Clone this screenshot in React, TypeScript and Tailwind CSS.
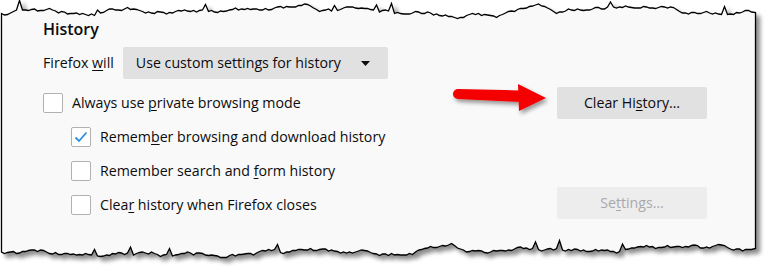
import React from 'react';

// torn paper edge, deterministic
function tornEdge(seed: number, base: number, amp: number, x0: number, x1: number) {
  let s = seed;
  const rand = () => {
    s = (s * 9301 + 49297) % 233280;
    return s / 233280;
  };
  const pts: [number, number][] = [];
  let y = base;
  let drift = 0;
  for (let x = x0; x <= x1; x += 3) {
    drift += (rand() - 0.5) * 1.2 - drift * 0.08;
    y += (rand() - 0.5) * 3.6 - (y - base - drift * 3) * 0.15;
    let yy = y;
    if (rand() < 0.035) yy -= amp * (0.8 + rand());
    pts.push([x, Math.round(yy * 2) / 2]);
  }
  pts[pts.length - 1][0] = x1;
  return pts;
}

const top = tornEdge(17, 12, 5, 1.5, 755.5);
const bottom = tornEdge(91, 251, 5, 1.5, 755.5);

const framePath =
  'M' +
  top.map(([x, y]) => `${x},${y}`).join(' L') +
  ' L' +
  bottom
    .slice()
    .reverse()
    .map(([x, y]) => `${x},${y}`)
    .join(' L') +
  ' Z';

function AccessKey({ text, k }: { text: string; k: number }) {
  return (
    <span>
      {text.slice(0, k)}
      <span className="underline underline-offset-2 decoration-1">{text[k]}</span>
      {text.slice(k + 1)}
    </span>
  );
}

function Checkbox({ checked }: { checked?: boolean }) {
  return (
    <div className="w-[20px] h-[20px] rounded-[2px] border border-[#b1b1b3] bg-white flex items-center justify-center shrink-0">
      {checked && (
        <svg width="14" height="12" viewBox="0 0 14 12">
          <path d="M1.5 6.5 L5 10 L12.5 1.5" fill="none" stroke="#2a8fe0" strokeWidth="1.8" />
        </svg>
      )}
    </div>
  );
}

export default function App() {
  return (
    <div
      className="relative w-[768px] h-[274px] bg-white overflow-hidden text-[14.2px] text-[#0c0c0d]"
      style={{ fontFamily: '"Open Sans", "Noto Sans", sans-serif' }}
    >
      {/* torn paper frame */}
      <svg className="absolute inset-0" width="768" height="274">
        <defs>
          <filter id="sh" x="-5%" y="-10%" width="110%" height="130%">
            <feDropShadow dx="4" dy="4" stdDeviation="2" floodColor="#000" floodOpacity="0.45" />
          </filter>
          <filter id="ash" x="-20%" y="-40%" width="140%" height="180%">
            <feDropShadow dx="2" dy="3" stdDeviation="2" floodColor="#000" floodOpacity="0.4" />
          </filter>
        </defs>
        <path d={framePath} fill="#f9f9fa" stroke="#000" strokeWidth="1.3" filter="url(#sh)" />
      </svg>

      <div className="relative pl-[43px] pr-[61px] pt-[19px]">
        {/* Heading */}
        <div className="h-[20px] flex items-center text-[16px] font-semibold">History</div>

        {/* Firefox will */}
        <div className="mt-[8px] flex items-center gap-[9px]">
          <span>
            Firefox <AccessKey text="will" k={0} />
          </span>
          <div className="w-[265px] h-[32px] rounded-[2px] bg-[#e1e1e2] flex items-center justify-between pl-[13px] pr-[18px]">
            <span>Use custom settings for history</span>
            <svg width="9" height="5" viewBox="0 0 9 5">
              <path d="M0 0 L9 0 L4.5 5 Z" fill="#0c0c0d" />
            </svg>
          </div>
        </div>

        {/* Options */}
        <div className="mt-[7px] flex flex-col">
          <div className="h-[34px] flex items-center justify-between">
            <div className="flex items-center gap-[9px]">
              <Checkbox />
              <AccessKey text="Always use private browsing mode" k={11} />
            </div>
            <button className="w-[150px] h-[32px] rounded-[2px] bg-[#e1e1e2] flex items-center justify-center">
              <AccessKey text="Clear History…" k={8} />
            </button>
          </div>
          <div className="h-[34px] flex items-center pl-[28px] gap-[9px]">
            <Checkbox checked />
            <AccessKey text="Remember browsing and download history" k={5} />
          </div>
          <div className="h-[34px] flex items-center pl-[28px] gap-[9px]">
            <Checkbox />
            <AccessKey text="Remember search and form history" k={20} />
          </div>
          <div className="h-[34px] flex items-center justify-between pl-[28px]">
            <div className="flex items-center gap-[9px]">
              <Checkbox />
              <AccessKey text="Clear history when Firefox closes" k={4} />
            </div>
            <button className="w-[150px] h-[32px] -mt-[5px] rounded-[2px] bg-[#ededee] text-[#a9a9ab] flex items-center justify-center">
              <AccessKey text="Settings…" k={2} />
            </button>
          </div>
        </div>
      </div>

      {/* red arrow callout */}
      <svg className="absolute left-[446px] top-[78px]" width="110" height="40" viewBox="446 78 110 40">
        <g filter="url(#ash)">
          <path d="M458,89 L521,90.5 L521,102 L458,99 A5,5 0 0 1 458,89 Z" fill="#f40000" />
          <path d="M518,84 L546,98 L519,111 Z" fill="#f40000" />
        </g>
      </svg>
    </div>
  );
}
